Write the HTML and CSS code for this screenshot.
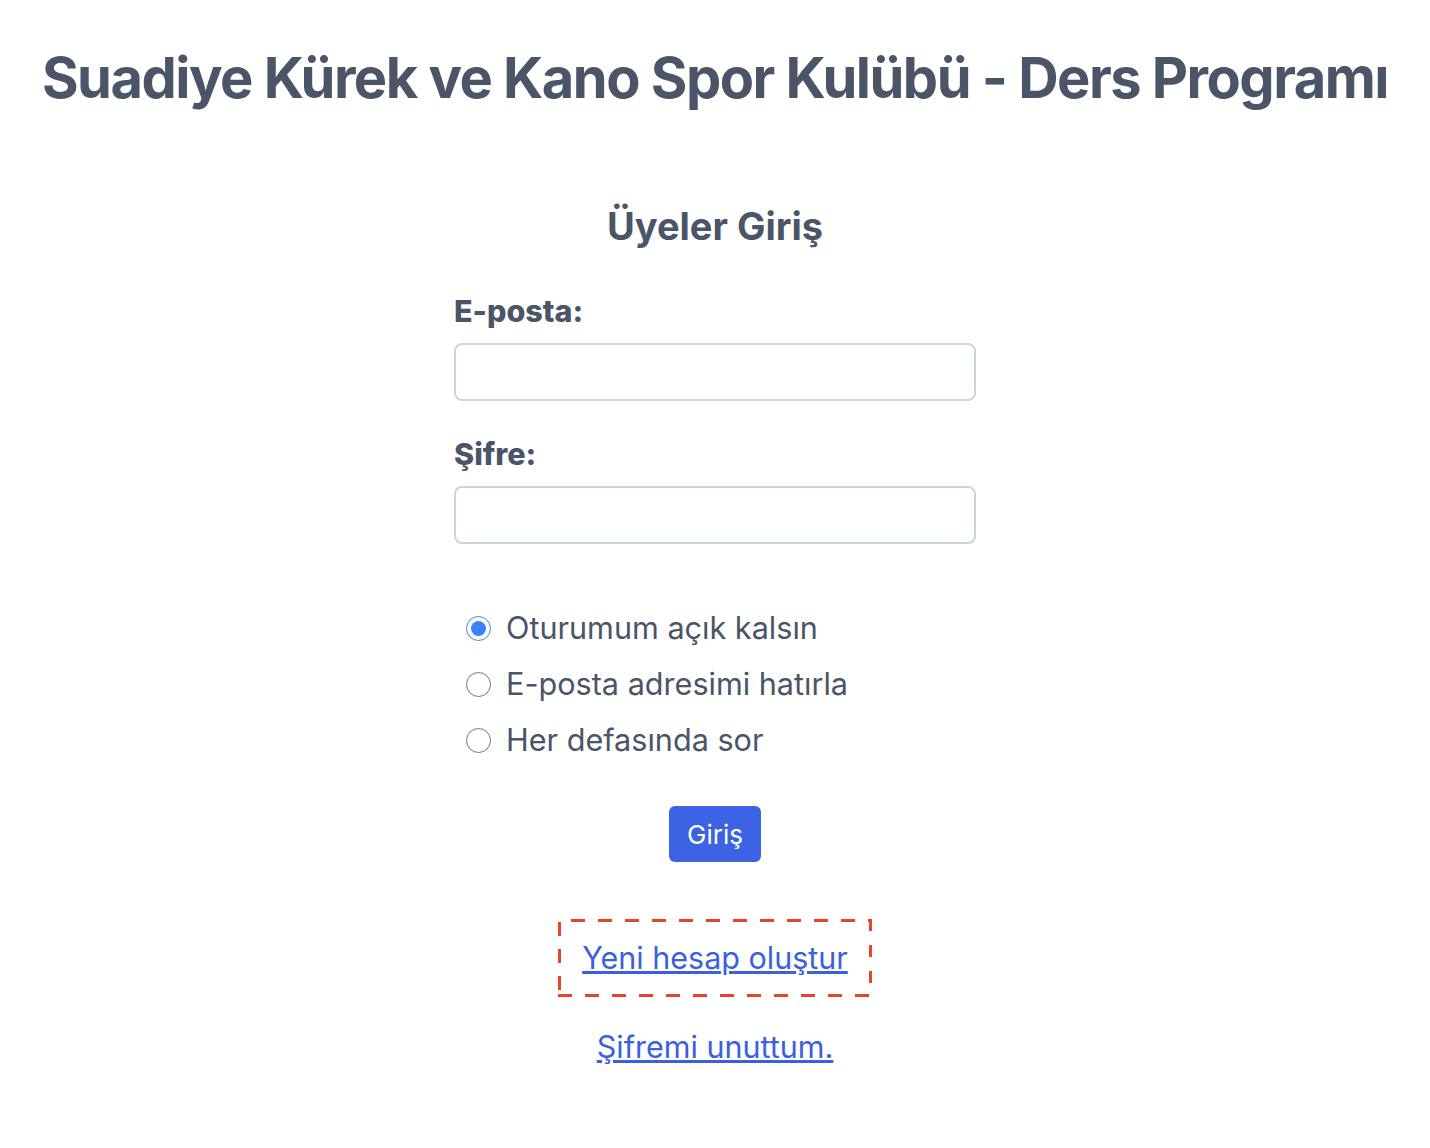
FILE: index.html
```html
<!DOCTYPE html>
<html lang="tr">
<head>
    <meta charset="UTF-8">
    <meta name="viewport" content="width=device-width, initial-scale=1.0">
    <title>Suadiye Kürek ve Kano Spor Kulübü - Ders Programı</title>
    <link rel="stylesheet" href="styles.css">
</head>
<body>
    <h1 class="page-title">Suadiye Kürek ve Kano Spor Kulübü - Ders Programı</h1>

    <div class="login-box">
        <h2>Üyeler Giriş</h2>

        <form class="login-form" onsubmit="return false;">
            <label class="field-label" for="email">E-posta:</label>
            <input class="field-input" type="email" id="email">

            <label class="field-label" for="password">Şifre:</label>
            <input class="field-input" type="password" id="password">

            <div class="remember-options">
                <label class="option">
                    <input type="radio" name="remember" value="session" checked>
                    <span>Oturumum açık kalsın</span>
                </label>
                <label class="option">
                    <input type="radio" name="remember" value="email">
                    <span>E-posta adresimi hatırla</span>
                </label>
                <label class="option">
                    <input type="radio" name="remember" value="ask">
                    <span>Her defasında sor</span>
                </label>
            </div>

            <div class="submit-row">
                <button class="login-button" type="submit">Giriş</button>
            </div>
        </form>

        <div class="links">
            <div class="register-link"><a href="#">Yeni hesap oluştur</a></div>
            <div class="forgot-link"><a href="#">Şifremi unuttum.</a></div>
        </div>
    </div>
</body>
</html>
```

FILE: styles.css
```css
body {
    font-family: Inter, "Noto Sans", sans-serif;
    margin: 0;
    padding: 0;
    background-color: #fff;
    color: #4a5568;
}
.page-title {
    text-align: center;
    font-size: 56px;
    font-weight: 700;
    letter-spacing: -0.027em;
    line-height: 68px;
    margin: 44px 0 0;
}
.login-box {
    width: 522px;
    margin: 91px auto 0;
}
.login-box h2 {
    text-align: center;
    font-size: 38px;
    font-weight: 700;
    line-height: 46px;
    margin: 0 0 44px;
}
.login-form {
    display: flex;
    flex-direction: column;
}
.field-label {
    font-size: 30.5px;
    font-weight: 800;
    line-height: 36px;
    margin-bottom: 14px;
}
.field-input {
    height: 58px;
    box-sizing: border-box;
    border: 2px solid #cbd5e0;
    border-radius: 8px;
    margin: 0 0 35px;
    font-size: 24px;
    padding: 0 12px;
}
.remember-options {
    display: flex;
    flex-direction: column;
    gap: 20px;
    margin-top: 31px;
    padding-left: 12px;
}
.option {
    display: flex;
    align-items: center;
    font-size: 30.6px;
    line-height: 36px;
}
.option input {
    width: 25px;
    height: 25px;
    margin: 0 15px 0 0;
    accent-color: #3b82f6;
}
.submit-row {
    display: flex;
    justify-content: center;
    margin-top: 48px;
}
.login-button {
    font-family: inherit;
    font-size: 26px;
    color: #fff;
    background-color: #3b63e3;
    border: none;
    border-radius: 6px;
    padding: 0 18px;
    height: 56px;
    cursor: pointer;
}
.links {
    display: flex;
    flex-direction: column;
    align-items: center;
    margin-top: 57px;
}
.links a {
    color: #3b5fe0;
    font-size: 30.5px;
    line-height: 36px;
}
/* dashed frame drawn with gradients so the dashes come out long */
.register-link {
    padding: 21px 24px;
    background:
        repeating-linear-gradient(90deg, transparent 0 13px, #e8442c 13px 27px) top left / 100% 3px no-repeat,
        repeating-linear-gradient(90deg, #e8442c 0 14px, transparent 14px 27px) bottom left / 100% 3px no-repeat,
        repeating-linear-gradient(180deg, transparent 0 3px, #e8442c 3px 17px, transparent 17px 27px) top left / 3px 100% no-repeat,
        repeating-linear-gradient(180deg, #e8442c 0 12px, transparent 12px 26px) top right / 3px 100% no-repeat;
}
.forgot-link {
    margin-top: 32px;
}
```
